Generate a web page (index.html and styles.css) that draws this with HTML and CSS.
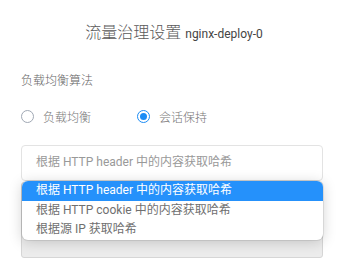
FILE: index.html
```html
<!DOCTYPE html>
<html>
<head>
<meta charset="utf-8">
<link rel="stylesheet" href="styles.css">
</head>
<body>
<div class="panel">
  <div class="title"><span class="title-main">流量治理设置</span> <span class="title-sub">nginx-deploy-0</span></div>
  <div class="label">负载均衡算法</div>
  <div class="radios">
    <label class="radio"><span class="dot"></span>负载均衡</label>
    <label class="radio checked"><span class="dot"></span>会话保持</label>
  </div>
  <div class="field">
    <div class="select">根据 HTTP header 中的内容获取哈希</div>
    <div class="below"></div>
    <ul class="menu">
      <li class="active">根据 HTTP header 中的内容获取哈希</li>
      <li>根据 HTTP cookie 中的内容获取哈希</li>
      <li>根据源 IP 获取哈希</li>
    </ul>
  </div>
</div>
</body>
</html>
```
FILE: styles.css
```css
* { box-sizing: border-box; }
html, body { margin: 0; padding: 0; background: #fff; }
body { font-family: Roboto, "Noto Sans CJK SC", sans-serif; width: 342px; height: 265px; overflow: hidden; }
.panel { padding: 19px 19px 0 21px; }
.title { text-align: center; height: 24px; line-height: 24px; padding-left: 4px; color: #555; }
.title-main { font-size: 16px; font-family: "Noto Sans CJK SC", sans-serif; font-weight: 300; color: #5a5a5a; }
.title-sub { font-size: 12px; color: #444; }
.label { margin-top: 28px; font-size: 12px; line-height: 18px; color: #666; font-family: "Noto Sans CJK SC", sans-serif; font-weight: 300; }
.radios { display: flex; margin-top: 18px; height: 18px; align-items: center; }
.radio { display: flex; align-items: center; font-size: 12px; color: #777; font-family: "Noto Sans CJK SC", sans-serif; font-weight: 300; width: 116px; }
.dot { width: 13px; height: 13px; border: 1px solid #a0a8b4; border-radius: 50%; margin-right: 9px; position: relative; }
.radio.checked .dot { border-color: #1b8cf5; }
.radio.checked .dot::after { content: ""; position: absolute; left: 2px; top: 2px; width: 7px; height: 7px; border-radius: 50%; background: #1b8cf5; }
.field { position: relative; margin-top: 20px; }
.select { height: 36px; border: 1px solid #e3e3e3; border-radius: 4px; padding-left: 14px; line-height: 33px; font-size: 12px; color: #999; }
.below { height: 76px; margin-top: 1px; border: 1px solid #d6d6d6; border-radius: 3px; background: #ececec; }
.menu { position: absolute; left: 1px; right: 0; top: 36px; margin: 0; padding: 0; list-style: none; background: #fff; border-radius: 6px; overflow: hidden; box-shadow: 0 2px 14px rgba(0,0,0,0.18), 0 0 0 1px rgba(0,0,0,0.08); }
.menu li { height: 19.5px; line-height: 19px; padding-left: 14px; font-size: 12px; color: #6f6f6f; }
.menu li.active { background: #2591fb; color: #fff; }
```
